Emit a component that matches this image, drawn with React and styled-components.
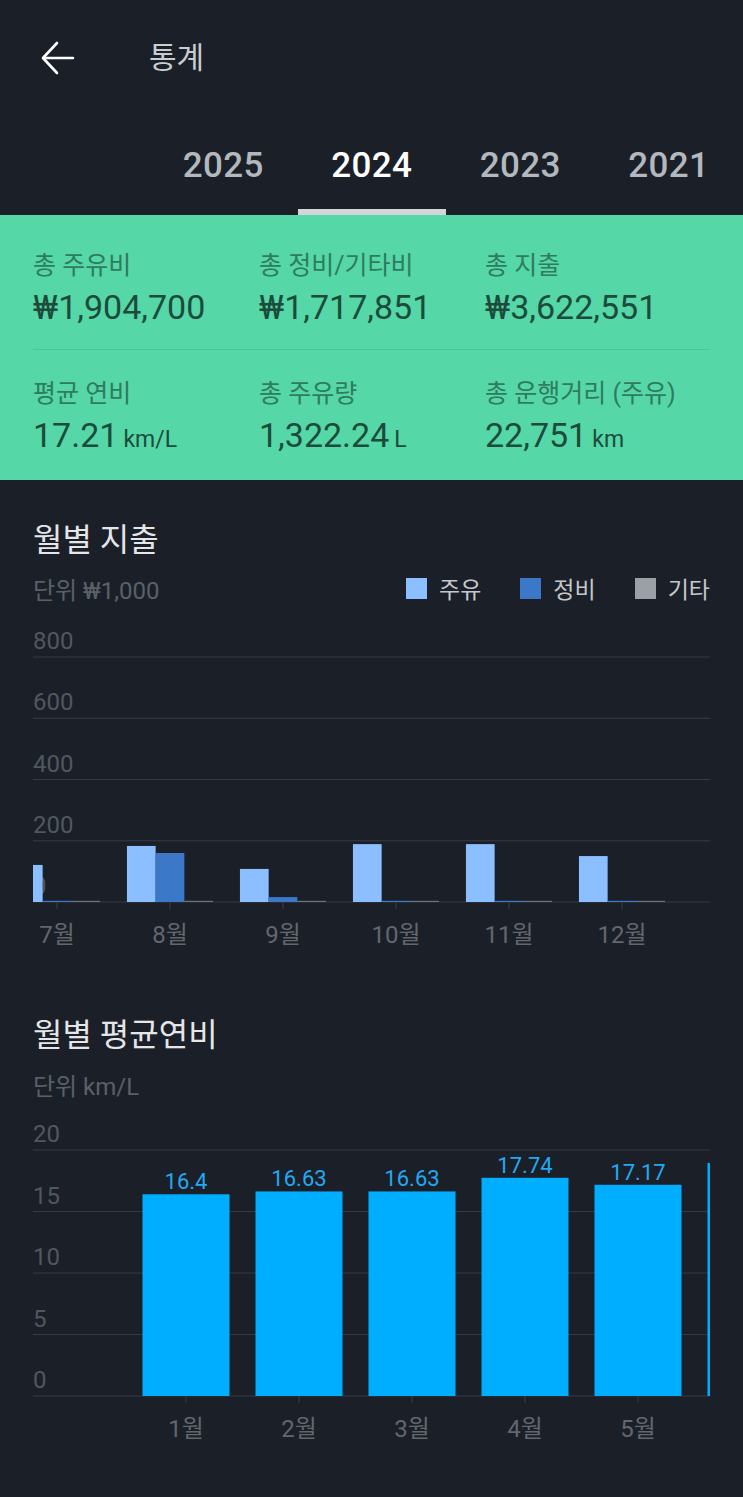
import React from "react";
import styled, { createGlobalStyle } from "styled-components";

const Colors = {
  bg: "#1b2028",
  green: "#55d7a7",
  greenLine: "#4cc698",
  greenLabel: "#2f7b5e",
  greenValue: "#1d4b3b",
  grid: "#363b43",
  axisText: "#51575f",
  monthText: "#62676e",
  fuel: "#8bbfff",
  repair: "#3b78c8",
  etc: "#9aa0a6",
  mileage: "#00aeff",
  mileageText: "#22a9f2"
};

const FONT = `Roboto, "Noto Sans CJK KR", "Noto Sans", sans-serif`;

const GlobalStyle = createGlobalStyle`
  html, body {
    margin: 0;
    padding: 0;
    background: ${Colors.bg};
  }
  body {
    font-family: ${FONT};
    -webkit-font-smoothing: antialiased;
  }
`;

const Screen = styled.div`
  width: 743px;
  min-height: 1497px;
  background: ${Colors.bg};
  overflow: hidden;
`;

const Header = styled.header`
  height: 116px;
  display: flex;
  align-items: center;
  padding-left: 40px;
`;

const BackButton = styled.button`
  width: 36px;
  height: 36px;
  padding: 0;
  border: 0;
  background: none;
  display: flex;
  align-items: center;
  justify-content: center;
  margin-right: 73px;
`;

const Title = styled.h1`
  margin: 0;
  font-size: 30px;
  font-weight: 400;
  color: #c9cdd1;
  line-height: 40px;
`;

const TabBar = styled.nav`
  height: 99px;
  display: flex;
  padding-left: 149px;
`;

const Tab = styled.div`
  width: 148.5px;
  display: flex;
  flex-direction: column;
  align-items: center;
  padding-top: 30px;
  box-sizing: border-box;
`;

const TabLabel = styled.span`
  font-size: 35px;
  font-weight: 500;
  line-height: 40px;
  letter-spacing: 0.3px;
  color: ${p => (p.$active ? "#ffffff" : "#b2b8be")};
`;

const TabIndicator = styled.span`
  margin-top: 23px;
  width: 100%;
  height: 6px;
  background: ${p => (p.$active ? "#d2d6da" : "transparent")};
`;

const Summary = styled.section`
  background: ${Colors.green};
  padding: 36px 33px 25px;
`;

const SummaryRow = styled.div`
  display: grid;
  grid-template-columns: 226px 226px 1fr;
`;

const Divider = styled.div`
  height: 1px;
  background: ${Colors.greenLine};
  margin: 22px 0 29px;
`;

const StatLabel = styled.div`
  height: 30px;
  font-size: 25px;
  line-height: 30px;
  color: ${Colors.greenLabel};
  white-space: nowrap;
`;

const StatValue = styled.div`
  margin-top: 6px;
  height: 40px;
  font-size: 34px;
  line-height: 40px;
  color: ${Colors.greenValue};
  white-space: nowrap;
`;

const Unit = styled.span`
  font-size: 23px;
  line-height: 1;
  margin-left: 5px;
`;

const ChartSection = styled.section`
  padding: ${p => p.$top}px 33px 0;
`;

const SectionTitle = styled.h2`
  margin: 0;
  font-size: 32px;
  font-weight: 400;
  line-height: 40px;
  color: #e4e6e9;
`;

const SubRow = styled.div`
  margin-top: ${p => p.$gap}px;
  height: 30px;
  display: flex;
  align-items: center;
  justify-content: space-between;
`;

const UnitNote = styled.span`
  font-size: 24px;
  color: #5a6068;
`;

const Legend = styled.div`
  display: flex;
  align-items: center;
`;

const LegendItem = styled.div`
  display: flex;
  align-items: center;
  margin-left: 39px;
  font-size: 23px;
  color: #c4c8cd;
`;

const Swatch = styled.span`
  width: 21px;
  height: 21px;
  background: ${p => p.$color};
  margin-right: 12px;
`;

const Plot = styled.svg`
  display: block;
  margin-top: ${p => p.$gap}px;
  overflow: hidden;
  font-family: ${FONT};
`;

const W = 677;

function ArrowIcon() {
  return (
    <svg width="34" height="34" viewBox="0 0 34 34" fill="none">
      <path
        d="M32 17H3M16 2L2 17l14 15"
        stroke="#ffffff"
        strokeWidth="2.6"
        strokeLinecap="round"
        strokeLinejoin="round"
      />
    </svg>
  );
}

const expenses = [
  { month: "7월", fuel: 121, repair: 0, etc: 0 },
  { month: "8월", fuel: 183, repair: 160, etc: 0 },
  { month: "9월", fuel: 108, repair: 16, etc: 0 },
  { month: "10월", fuel: 189, repair: 0, etc: 0 },
  { month: "11월", fuel: 189, repair: 0, etc: 0 },
  { month: "12월", fuel: 150, repair: 0, etc: 0 }
];

// the 6th bar is scrolled almost out of view, only its left edge shows
const mileage = [
  { month: "1월", value: 16.4 },
  { month: "2월", value: 16.63 },
  { month: "3월", value: 16.63 },
  { month: "4월", value: 17.74 },
  { month: "5월", value: 17.17 },
  { month: "6월", value: 18.94, hidden: true }
];

function Grid({ ticks, top, step }) {
  return ticks.map((t, i) => {
    const y = top + i * step;
    return (
      <g key={t}>
        <text x="0" y={y - 8} fontSize="24" fill={Colors.axisText}>
          {t}
        </text>
        <line x1="0" x2={W} y1={y} y2={y} stroke={Colors.grid} strokeWidth="1.2" />
      </g>
    );
  });
}

function ExpenseChart() {
  const base = 287;
  const scale = 61.25 / 200;
  const bw = 28.7;
  const bar = v => Math.max(v * scale, 1.2);
  return (
    <Plot width={W} height="340" viewBox={`0 0 ${W} 340`} $gap={12}>
      <Grid ticks={["800", "600", "400", "200", "0"]} top={42} step={61.25} />
      {expenses.map((m, i) => {
        const c = 24 + i * 113;
        return (
          <g key={m.month}>
            <rect x={c - bw * 1.5} y={base - bar(m.fuel)} width={bw} height={bar(m.fuel)} fill={Colors.fuel} />
            <rect x={c - bw * 0.5} y={base - bar(m.repair)} width={bw} height={bar(m.repair)} fill={Colors.repair} />
            <rect x={c + bw * 0.5} y={base - bar(m.etc)} width={bw} height={bar(m.etc)} fill={Colors.etc} opacity="0.6" />
            <line x1={c} x2={c} y1={base} y2={base + 7} stroke={Colors.grid} strokeWidth="1.2" />
            <text x={c} y={328} fontSize="24" textAnchor="middle" fill={Colors.monthText}>
              {m.month}
            </text>
          </g>
        );
      })}
    </Plot>
  );
}

function MileageChart() {
  const base = 286;
  const scale = 61.5 / 5;
  const bw = 87;
  return (
    <Plot width={W} height="340" viewBox={`0 0 ${W} 340`} $gap={11}>
      <Grid ticks={["20", "15", "10", "5", "0"]} top={40} step={61.5} />
      {mileage.map((m, i) => {
        const c = 153 + i * 113;
        const h = m.value * scale;
        return (
          <g key={m.month}>
            <rect x={c - bw / 2} y={base - h} width={bw} height={h} fill={Colors.mileage} />
            {!m.hidden && (
              <>
                <text x={c} y={base - h - 5} fontSize="22" textAnchor="middle" fill={Colors.mileageText}>
                  {m.value}
                </text>
                <line x1={c} x2={c} y1={base} y2={base + 7} stroke={Colors.grid} strokeWidth="1.2" />
                <text x={c} y={327} fontSize="24" textAnchor="middle" fill={Colors.monthText}>
                  {m.month}
                </text>
              </>
            )}
          </g>
        );
      })}
    </Plot>
  );
}

const summaryTop = [
  { label: "총 주유비", value: "₩1,904,700" },
  { label: "총 정비/기타비", value: "₩1,717,851" },
  { label: "총 지출", value: "₩3,622,551" }
];

const summaryBottom = [
  { label: "평균 연비", value: "17.21", unit: "km/L" },
  { label: "총 주유량", value: "1,322.24", unit: "L" },
  { label: "총 운행거리 (주유)", value: "22,751", unit: "km" }
];

function Stat({ label, value, unit }) {
  return (
    <div>
      <StatLabel>{label}</StatLabel>
      <StatValue>
        {value}
        {unit && <Unit>{unit}</Unit>}
      </StatValue>
    </div>
  );
}

export default function App() {
  const years = ["2025", "2024", "2023", "2021"];
  return (
    <Screen>
      <GlobalStyle />
      <Header>
        <BackButton aria-label="back">
          <ArrowIcon />
        </BackButton>
        <Title>통계</Title>
      </Header>
      <TabBar>
        {years.map(y => (
          <Tab key={y}>
            <TabLabel $active={y === "2024"}>{y}</TabLabel>
            <TabIndicator $active={y === "2024"} />
          </Tab>
        ))}
      </TabBar>
      <Summary>
        <SummaryRow>
          {summaryTop.map(s => (
            <Stat key={s.label} {...s} />
          ))}
        </SummaryRow>
        <Divider />
        <SummaryRow>
          {summaryBottom.map(s => (
            <Stat key={s.label} {...s} />
          ))}
        </SummaryRow>
      </Summary>
      <ChartSection $top={40}>
        <SectionTitle>월별 지출</SectionTitle>
        <SubRow $gap={13}>
          <UnitNote>단위 ₩1,000</UnitNote>
          <Legend>
            <LegendItem>
              <Swatch $color={Colors.fuel} />
              주유
            </LegendItem>
            <LegendItem>
              <Swatch $color={Colors.repair} />
              정비
            </LegendItem>
            <LegendItem>
              <Swatch $color={Colors.etc} />
              기타
            </LegendItem>
          </Legend>
        </SubRow>
        <ExpenseChart />
      </ChartSection>
      <ChartSection $top={60}>
        <SectionTitle>월별 평균연비</SectionTitle>
        <SubRow $gap={14}>
          <UnitNote>단위 km/L</UnitNote>
        </SubRow>
        <MileageChart />
      </ChartSection>
    </Screen>
  );
}
